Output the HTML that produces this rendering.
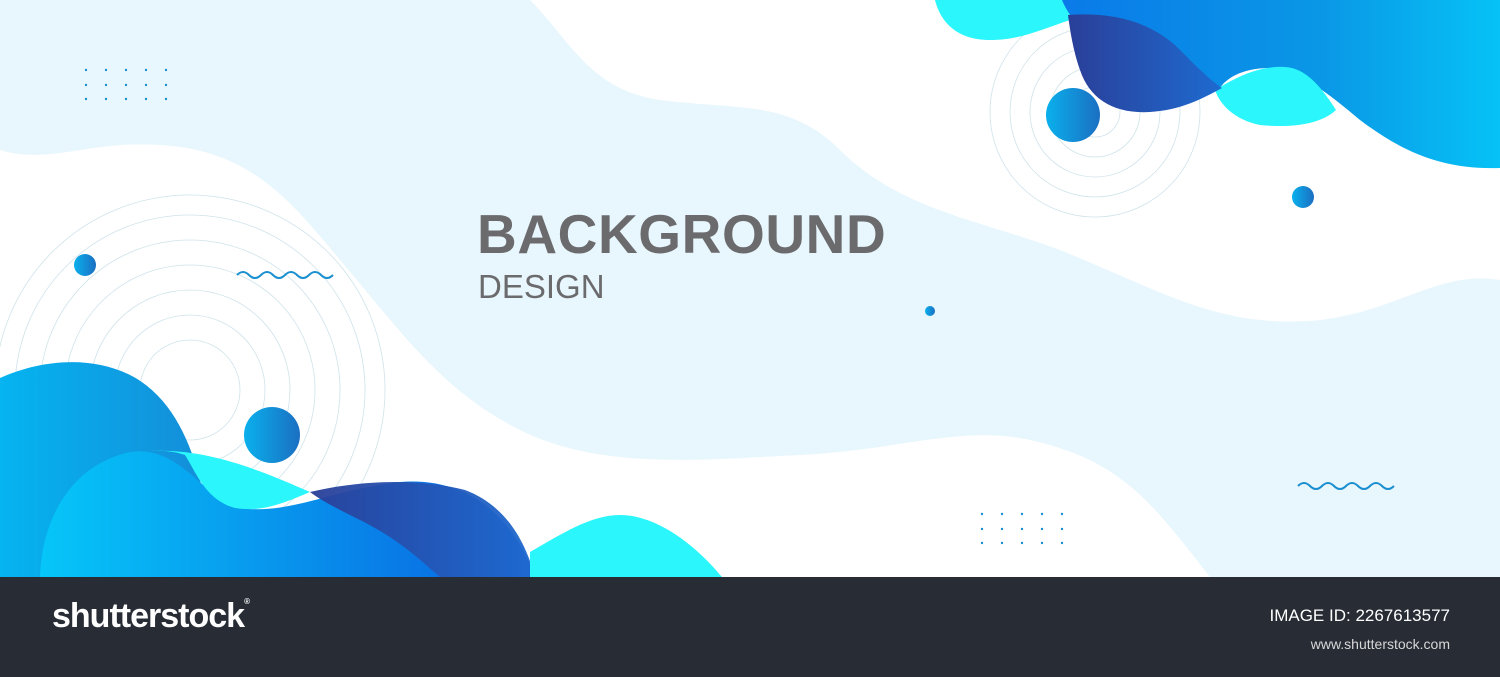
<!DOCTYPE html>
<html><head><style>
html,body{margin:0;padding:0;width:1500px;height:677px;overflow:hidden;background:#fff;font-family:"Liberation Sans",sans-serif}
.f{position:absolute;left:0;top:577px;width:1500px;height:100px;background:#272c35}
</style></head><body>
<svg width="1500" height="577" style="position:absolute;left:0;top:0" viewBox="0 0 1500 577">
<defs>
<linearGradient id="g1" x1="0" x2="1"><stop offset="0" stop-color="#05b4f0"/><stop offset="1" stop-color="#1a7fd0"/></linearGradient>
<linearGradient id="g2" x1="0" x2="1"><stop offset="0" stop-color="#06c6f8"/><stop offset="1" stop-color="#0a5fe0"/></linearGradient>
<linearGradient id="g3" x1="0" x2="1"><stop offset="0" stop-color="#2a3f98"/><stop offset="1" stop-color="#1e6ad0"/></linearGradient>
<linearGradient id="g4" x1="0" x2="1"><stop offset="0" stop-color="#0a7ae8"/><stop offset="0.6" stop-color="#0a98e6"/><stop offset="1" stop-color="#06c2f6"/></linearGradient>
<linearGradient id="gb" x1="0" x2="1"><stop offset="0" stop-color="#0ab0ec"/><stop offset="1" stop-color="#1b6fc2"/></linearGradient>
</defs>
<path fill="#e8f7fd" d="M0 0 L530 0 C570 40 590 90 660 100 C740 110 790 100 840 150 C900 210 980 220 1060 250 C1160 290 1220 330 1320 320 C1400 310 1440 270 1500 280 L1500 577 L1210 577 C1150 500 1120 460 1030 440 C960 425 900 450 800 455 C700 460 600 470 520 430 C440 390 400 330 340 260 C290 200 250 150 160 145 C90 140 50 165 0 150 Z"/>
<g fill="none" stroke="#cfe3ea" stroke-width="0.8">
<circle cx="190" cy="390" r="50"/><circle cx="190" cy="390" r="75"/><circle cx="190" cy="390" r="100"/><circle cx="190" cy="390" r="125"/><circle cx="190" cy="390" r="150"/><circle cx="190" cy="390" r="175"/><circle cx="190" cy="390" r="195"/>
<circle cx="1095" cy="112" r="25"/><circle cx="1095" cy="112" r="45"/><circle cx="1095" cy="112" r="65"/><circle cx="1095" cy="112" r="85"/><circle cx="1095" cy="112" r="105"/>
</g>
<path fill="#2af6fb" d="M935 0 L1070 0 L1070 20 C1040 30 1020 40 990 40 C955 40 940 20 935 0 Z"/>
<path fill="url(#g4)" d="M1062 0 L1500 0 L1500 168 C1440 170 1400 150 1360 120 C1330 95 1300 70 1270 68 C1240 68 1225 80 1220 88 L1120 60 C1090 40 1070 20 1062 0 Z"/>
<path fill="#2af6fb" d="M1215 90 C1240 75 1260 66 1285 67 C1305 68 1320 85 1336 110 C1320 125 1290 128 1260 125 C1235 120 1220 105 1215 90 Z"/>
<path fill="url(#g3)" d="M1068 15 C1110 12 1150 20 1180 50 C1200 70 1210 80 1222 88 C1200 100 1180 110 1150 112 C1115 114 1090 100 1080 70 C1073 50 1070 30 1068 15 Z"/>
<path fill="url(#g1)" d="M0 378 C40 360 90 355 130 375 C170 395 190 440 200 480 C210 520 240 520 280 520 L280 577 L0 577 Z"/>
<path fill="url(#g2)" d="M40 577 C42 520 70 465 130 452 C180 445 200 495 240 508 C290 515 330 490 400 482 C470 476 515 520 535 577 Z"/>
<path fill="#2af6fb" d="M140 452 C200 445 260 470 310 492 C280 505 260 512 235 508 C205 500 195 470 185 455 C170 450 155 450 140 452 Z"/>
<path fill="url(#g3)" d="M310 492 C360 480 420 478 465 490 C505 505 525 540 535 577 L440 577 C420 560 400 540 360 520 C340 510 320 500 310 492 Z" opacity="0.95"/>
<path fill="#2af6fb" d="M530 552 C560 535 590 515 620 515 C660 515 700 550 722 577 L530 577 Z"/>
<circle cx="85" cy="265" r="11" fill="url(#gb)"/>
<circle cx="272" cy="435" r="28" fill="url(#gb)"/>
<circle cx="1073" cy="115" r="27" fill="url(#gb)"/>
<circle cx="1303" cy="197" r="11" fill="url(#gb)"/>
<circle cx="930" cy="311" r="5" fill="url(#gb)"/>
<g fill="none" stroke="#1a8fd0" stroke-width="2">
<path d="M237 275 q6 -6 12 0 t12 0 t12 0 t12 0 t12 0 t12 0 t12 0 t12 0"/>
<path d="M1298 486 q6 -6 12 0 t12 0 t12 0 t12 0 t12 0 t12 0 t12 0 t12 0"/>
</g>
<g fill="#1a8fd0">
<circle cx="86" cy="70" r="1.2"/><circle cx="106" cy="70" r="1.2"/><circle cx="126" cy="70" r="1.2"/><circle cx="146" cy="70" r="1.2"/><circle cx="166" cy="70" r="1.2"/>
<circle cx="86" cy="85" r="1.2"/><circle cx="106" cy="85" r="1.2"/><circle cx="126" cy="85" r="1.2"/><circle cx="146" cy="85" r="1.2"/><circle cx="166" cy="85" r="1.2"/>
<circle cx="86" cy="99" r="1.2"/><circle cx="106" cy="99" r="1.2"/><circle cx="126" cy="99" r="1.2"/><circle cx="146" cy="99" r="1.2"/><circle cx="166" cy="99" r="1.2"/>
<circle cx="982" cy="514" r="1.2"/><circle cx="1002" cy="514" r="1.2"/><circle cx="1022" cy="514" r="1.2"/><circle cx="1042" cy="514" r="1.2"/><circle cx="1062" cy="514" r="1.2"/>
<circle cx="982" cy="529" r="1.2"/><circle cx="1002" cy="529" r="1.2"/><circle cx="1022" cy="529" r="1.2"/><circle cx="1042" cy="529" r="1.2"/><circle cx="1062" cy="529" r="1.2"/>
<circle cx="982" cy="543" r="1.2"/><circle cx="1002" cy="543" r="1.2"/><circle cx="1022" cy="543" r="1.2"/><circle cx="1042" cy="543" r="1.2"/><circle cx="1062" cy="543" r="1.2"/>
</g>
<text x="477" y="253" font-family="Liberation Sans" font-weight="bold" font-size="55" fill="#6b6b6d" letter-spacing="0.6">BACKGROUND</text>
<text x="478" y="298" font-family="Liberation Sans" font-size="33" fill="#6b6b6d">DESIGN</text>
</svg>
<div class="f">
<div style="position:absolute;left:52px;top:20px;color:#fff;font-size:34px;font-weight:bold;letter-spacing:-1px">shutterstock<span style="font-size:8px;vertical-align:top">®</span></div>
<div style="position:absolute;right:50px;top:29px;color:#fff;font-size:17px">IMAGE ID: 2267613577</div>
<div style="position:absolute;right:50px;top:59px;color:#d8d8d8;font-size:14px">www.shutterstock.com</div>
</div>
</body></html>
